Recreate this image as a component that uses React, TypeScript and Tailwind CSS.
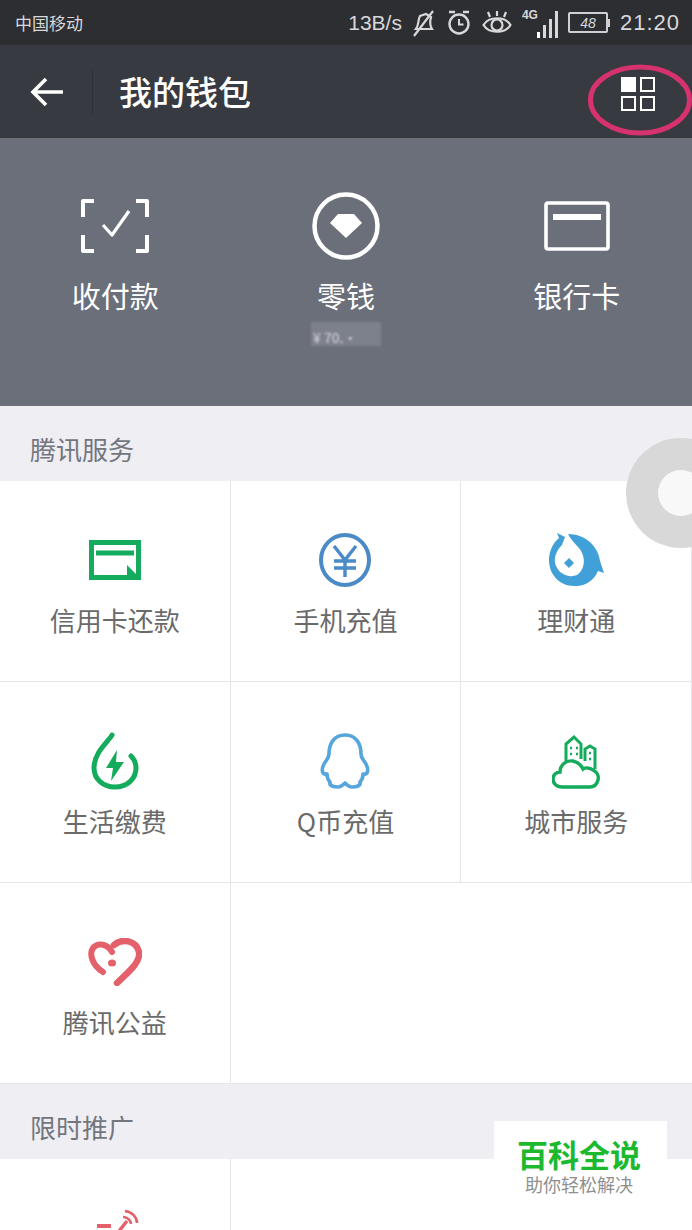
import type { ReactNode } from 'react'

const CJK = "font-['Noto_Sans_CJK_SC','Noto_Sans',sans-serif]"

// Status bar glyphs
function MuteIcon() {
  return (
    <svg width="24" height="28" viewBox="0 0 24 28" fill="none" stroke="#d8d8da" strokeWidth="2.2">
      <path d="M4 20 C7 16 6 10 8 7 L14 5 L19 8 C18 12 18 17 20 20 Z" />
      <path d="M2 27 L21 2" />
    </svg>
  )
}

function AlarmIcon() {
  return (
    <svg width="26" height="28" viewBox="0 0 26 28" fill="none" stroke="#d8d8da" strokeWidth="2.4">
      <circle cx="13" cy="15" r="9.5" />
      <path d="M13 10 V15.5 H17.5" strokeWidth="2" />
      <path d="M3 3 H9 M17 3 H23" />
    </svg>
  )
}

function EyeIcon() {
  return (
    <svg width="30" height="26" viewBox="0 0 30 26" fill="none" stroke="#d8d8da" strokeWidth="2.2">
      <path d="M1.5 15 C7 6 23 6 28.5 15 C23 24 7 24 1.5 15 Z" />
      <circle cx="15" cy="15" r="5.5" />
      <path d="M6 2 L8 7 M15 1 V6 M24 2 L22 7" />
    </svg>
  )
}

function SignalIcon() {
  return (
    <div className="relative h-[30px] w-[36px]">
      <span className="absolute left-0 top-0 text-[12px] font-bold leading-[14px] text-[#d8d8da] font-['Liberation_Sans',sans-serif]">
        4G
      </span>
      <div className="absolute bottom-0 right-0 flex items-end gap-[3px]">
        <span className="h-[6px] w-[3px] bg-white" />
        <span className="h-[13px] w-[3px] bg-[#d8d8da]" />
        <span className="h-[19px] w-[3px] bg-[#d8d8da]" />
        <span className="h-[27px] w-[3px] bg-[#d8d8da]" />
      </div>
    </div>
  )
}

function Battery() {
  return (
    <div className="flex items-center">
      <div className="flex h-[21px] w-[40px] items-center justify-center rounded-[2px] border-2 border-[#d0d0d2] text-[14px] italic leading-none text-[#d8d8da] font-['Liberation_Sans',sans-serif]">
        48
      </div>
      <span className="h-[8px] w-[2px] bg-[#d0d0d2]" />
    </div>
  )
}

// Wallet panel icons
function ScanIcon() {
  return (
    <svg width="68" height="54" viewBox="0 0 68 54" fill="none" stroke="#fff" strokeWidth="4" strokeLinejoin="round">
      <path d="M13 2 H2 V18 M55 2 H66 V18 M13 52 H2 V36 M55 52 H66 V36" />
      <path d="M22 26 L31 36 L48 12" strokeWidth="3.2" />
    </svg>
  )
}

function DiamondIcon() {
  return (
    <svg width="68" height="68" viewBox="0 0 68 68">
      <circle cx="34" cy="34" r="31.5" fill="none" stroke="#fff" strokeWidth="4.5" />
      <path d="M26 22 H42 L50 31 L34 46 L18 31 Z" fill="#fff" />
    </svg>
  )
}

function CardIcon() {
  return (
    <svg width="66" height="50" viewBox="0 0 66 50" fill="none" stroke="#fff">
      <rect x="2" y="2" width="62" height="46" rx="2" strokeWidth="3.6" />
      <path d="M9 16 H57" strokeWidth="6" />
    </svg>
  )
}

// Service grid icons
function CreditIcon() {
  return (
    <svg width="54" height="42" viewBox="0 0 54 42">
      <path fillRule="evenodd" d="M1 1 H53 V41 H1 Z M6 6 V36 H39 V26 L48 35 V6 Z" fill="#15ab5c" />
      <path d="M8 14 H46" stroke="#15ab5c" strokeWidth="5" />
      <path d="M39 27 L53 41 H39 Z" fill="#15ab5c" />
    </svg>
  )
}

function YuanIcon() {
  return (
    <svg width="52" height="54" viewBox="0 0 52 54" fill="none" stroke="#4a8ac6">
      <ellipse cx="26" cy="27" rx="24" ry="25" strokeWidth="4" />
      <path d="M15 13 L26 27 L37 13 M26 27 V44 M15 28 H37 M15 35 H37" strokeWidth="3.4" />
    </svg>
  )
}

function FishIcon() {
  return (
    <svg width="56" height="54" viewBox="0 0 56 54">
      <path
        fillRule="evenodd"
        d="M20 1 C36 1 50 12 52 28 L56 40 L50 38 C46 48 36 54 26 53 C12 53 1 42 1 27 C1 18 5 10 11 5 L9 0 L17 4 L14 12 C8 18 5 26 8 33 C12 42 22 45 29 42 C38 36 38 22 30 14 C26 10 22 5 20 1 Z"
        fill="#42a0d8"
      />
      <path d="M21 25 L26 30 L21 35 L16 30 Z" fill="#42a0d8" />
    </svg>
  )
}

function PowerIcon() {
  return (
    <svg width="48" height="58" viewBox="0 0 48 58" fill="none">
      <path
        d="M21 3 C18 9 3 20 3 36 C3 47 12 55 24 55 C36 55 45 47 45 36 C45 30 42 26 40 24"
        stroke="#15ab5c"
        strokeWidth="5"
        strokeLinecap="round"
      />
      <path d="M26 18 L15 36 H22 L20 49 L33 30 H25 Z" fill="#15ab5c" />
    </svg>
  )
}

function PenguinIcon() {
  return (
    <svg width="50" height="56" viewBox="0 0 50 56" fill="none">
      <path
        d="M25 2 C13 2 9 12 9 21 C9 25 7 26 4 31 C1 37 2 42 7 41 C7 45 9 48 10 49 C9 53 14 54 18 54 C21 54 23 52 25 50 C27 52 29 54 32 54 C36 54 41 53 40 49 C41 48 43 45 43 41 C48 42 49 37 46 31 C43 26 41 25 41 21 C41 12 37 2 25 2 Z"
        stroke="#56a5dd"
        strokeWidth="3.6"
        strokeLinejoin="round"
      />
    </svg>
  )
}

function CityIcon() {
  return (
    <svg width="48" height="56" viewBox="0 0 48 56" fill="none" stroke="#15ab5c" strokeWidth="3">
      <path d="M14 30 V11 L22 4 L29 11 V26" />
      <path d="M33 28 V16 L38 13 L43 16 V36" />
      <path d="M18 15 H20 M24 15 H26 M18 21 H20 M24 21 H26 M37 20 H39 M37 26 H39" strokeWidth="2.4" />
      <path
        d="M10 54 C4 54 1 50 1 46 C1 42 4 39 8 39 C8 32 14 27 21 28 C26 29 29 32 31 36 C33 34 38 35 41 37 C45 39 47 43 46 47 C45 51 42 54 38 54 Z"
        fill="#fff"
        strokeWidth="3.4"
      />
    </svg>
  )
}

function HeartIcon() {
  return (
    <svg width="54" height="48" viewBox="0 0 54 48" fill="none" stroke="#e4606a" strokeLinecap="round">
      <path d="M24 14 C20 6 10 4 5 10 C1 16 4 27 15 34" strokeWidth="6" />
      <path d="M26 7 C34 0 48 2 51 14 C53 25 38 36 29 45" strokeWidth="6.5" />
      <ellipse cx="24" cy="25" rx="4" ry="3.5" fill="#e4606a" stroke="none" />
    </svg>
  )
}

function WaveIcon() {
  return (
    <svg width="48" height="58" viewBox="0 0 48 58" fill="none" stroke="#e4606a" strokeWidth="2.6">
      <path d="M6 17 H20" strokeWidth="4" />
      <path d="M34 2 C41 3 46 8 46 14 M32 8 C37 8 40 12 40 15" />
      <path d="M36 12 L28 22" strokeWidth="3.4" />
    </svg>
  )
}

function SectionHeader({ title }: { title: string }) {
  return (
    <div className="flex h-[75px] items-center bg-[#eeeef3] pl-[30px] pt-[10px]">
      <span className="text-[26px] leading-none text-[#74767e]">{title}</span>
    </div>
  )
}

function ServiceCell({ icon, label }: { icon?: ReactNode; label?: string }) {
  return (
    <div className="flex h-[201px] flex-col items-center border-b border-r border-[#e6e6e8] bg-white">
      {icon && <div className="mt-[50px] flex h-[58px] items-center justify-center">{icon}</div>}
      {label && <span className="mt-[15px] text-[26px] leading-[32px] text-[#6a6a6a]">{label}</span>}
    </div>
  )
}

function PanelItem({ icon, label, children }: { icon: ReactNode; label: string; children?: ReactNode }) {
  return (
    <div className="flex flex-col items-center">
      <div className="mt-[52px] flex h-[72px] items-center justify-center">{icon}</div>
      <span className="mt-[14px] text-[29px] leading-[38px] text-white">{label}</span>
      {children}
    </div>
  )
}

export default function App() {
  return (
    <div className={`relative h-[1230px] w-[692px] overflow-hidden bg-white ${CJK}`}>
      {/* Status bar */}
      <div className="flex h-[45px] items-center justify-between bg-[#2d2e32] pl-[15px] pr-[12px] text-[#d8d8da]">
        <span className="text-[17px]">中国移动</span>
        <div className="flex items-center gap-[10px] font-['Liberation_Sans',sans-serif]">
          <span className="text-[21px] font-light">13B/s</span>
          <MuteIcon />
          <AlarmIcon />
          <EyeIcon />
          <SignalIcon />
          <Battery />
          <span className="text-[22px] tracking-[1px]">21:20</span>
        </div>
      </div>

      {/* Title bar */}
      <div className="flex h-[93px] items-center bg-[#383a42] text-white">
        <svg className="ml-[30px]" width="34" height="30" viewBox="0 0 34 30" fill="none" stroke="#fff" strokeWidth="3.6">
          <path d="M16 2 L3 15 L16 28 M3 15 H33" />
        </svg>
        <span className="ml-[28px] h-[46px] w-px bg-[#2f3037]" />
        <span className="ml-[26px] text-[33px] font-medium leading-none">我的钱包</span>
        <div className="ml-auto mr-[37px] mt-[4px] grid grid-cols-2 gap-[4px]">
          <span className="h-[15px] w-[15px] bg-white" />
          <span className="h-[15px] w-[15px] border-2 border-white" />
          <span className="h-[15px] w-[15px] border-2 border-white" />
          <span className="h-[15px] w-[15px] border-2 border-white" />
        </div>
      </div>

      {/* Wallet panel */}
      <div className="grid h-[268px] grid-cols-3 bg-[#6a6f7a]">
        <PanelItem icon={<ScanIcon />} label="收付款" />
        <PanelItem icon={<DiamondIcon />} label="零钱">
          <div className="mt-[8px] flex h-[24px] w-[70px] items-end bg-[#7d818c] pl-[2px] text-[14px] leading-[18px] text-white/70 blur-[1px]">
            ¥ 70.·
          </div>
        </PanelItem>
        <PanelItem icon={<CardIcon />} label="银行卡" />
      </div>

      <SectionHeader title="腾讯服务" />
      <div className="grid grid-cols-3">
        <ServiceCell icon={<CreditIcon />} label="信用卡还款" />
        <ServiceCell icon={<YuanIcon />} label="手机充值" />
        <ServiceCell icon={<FishIcon />} label="理财通" />
        <ServiceCell icon={<PowerIcon />} label="生活缴费" />
        <ServiceCell icon={<PenguinIcon />} label="Q币充值" />
        <ServiceCell icon={<CityIcon />} label="城市服务" />
        <ServiceCell icon={<HeartIcon />} label="腾讯公益" />
        <div className="col-span-2 h-[201px] border-b border-[#e6e6e8]" />
      </div>

      <SectionHeader title="限时推广" />
      <div className="grid grid-cols-3">
        <ServiceCell icon={<WaveIcon />} />
      </div>

      {/* Highlight ring around the grid button */}
      <svg className="absolute left-[585px] top-[60px]" width="107" height="80" viewBox="0 0 107 80" fill="none">
        <ellipse cx="55" cy="40" rx="49.5" ry="33" stroke="#d6326f" strokeWidth="5" />
      </svg>

      {/* Floating assistive ball */}
      <div className="absolute left-[626px] top-[438px] flex h-[110px] w-[110px] items-center justify-center rounded-full bg-[#d6d6d6]/95">
        <span className="h-[46px] w-[46px] rounded-full bg-[#f8f8f8]" />
      </div>

      {/* Watermark */}
      <div className="absolute left-[494px] top-[1121px] flex h-[88px] w-[173px] flex-col items-center bg-white pr-[3px] pt-[15px]">
        <span className="text-[31px] font-bold leading-[36px] text-[#1cb92f]">百科全说</span>
        <span className="text-[18px] leading-[24px] text-[#8f8f8f]">助你轻松解决</span>
      </div>
    </div>
  )
}
